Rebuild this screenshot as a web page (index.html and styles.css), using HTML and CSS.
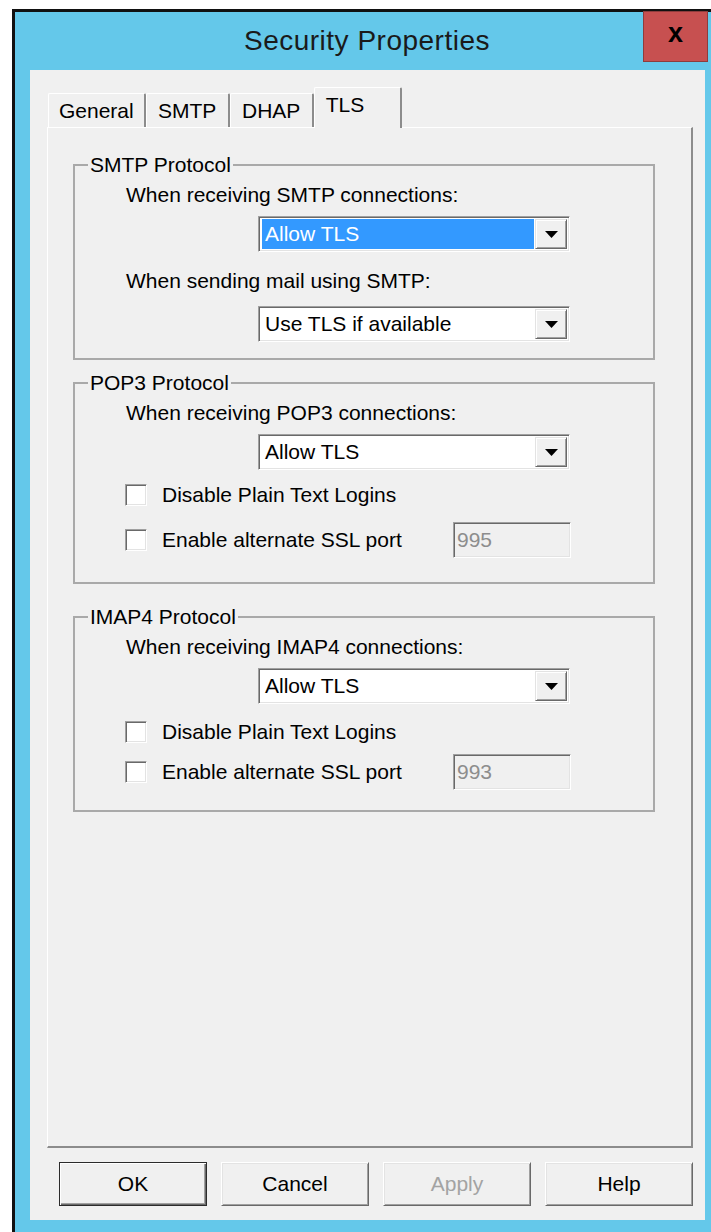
FILE: index.html
```html
<!DOCTYPE html>
<html lang="en">
<head>
<meta charset="utf-8">
<title>Security Properties</title>
<link rel="stylesheet" href="styles.css">
</head>
<body>
<div class="window">
  <div class="titlebar">
    <span class="title">Security Properties</span>
    <div class="close">x</div>
  </div>
  <div class="client">
    <div class="tabs">
      <div class="tab">General</div>
      <div class="tab">SMTP</div>
      <div class="tab">DHAP</div>
      <div class="tab tab-active">TLS</div>
    </div>
    <div class="panel">
      <fieldset class="group group-smtp">
        <legend>SMTP Protocol</legend>
        <div class="group-body">
          <div class="prompt">When receiving SMTP connections:</div>
          <div class="combo">
            <span class="combo-value combo-value-selected">Allow TLS</span>
            <span class="combo-btn"><svg width="13" height="7" viewBox="0 0 13 7"><polygon points="0,0 13,0 6.5,7" fill="#000"/></svg></span>
          </div>
          <div class="prompt prompt-next">When sending mail using SMTP:</div>
          <div class="combo combo-next">
            <span class="combo-value">Use TLS if available</span>
            <span class="combo-btn"><svg width="13" height="7" viewBox="0 0 13 7"><polygon points="0,0 13,0 6.5,7" fill="#000"/></svg></span>
          </div>
        </div>
      </fieldset>

      <fieldset class="group group-pop3">
        <legend>POP3 Protocol</legend>
        <div class="group-body">
          <div class="prompt">When receiving POP3 connections:</div>
          <div class="combo">
            <span class="combo-value">Allow TLS</span>
            <span class="combo-btn"><svg width="13" height="7" viewBox="0 0 13 7"><polygon points="0,0 13,0 6.5,7" fill="#000"/></svg></span>
          </div>
          <div class="row row-first">
            <label class="check"><span class="box"></span>Disable Plain Text Logins</label>
          </div>
          <div class="row row-second">
            <label class="check"><span class="box"></span>Enable alternate SSL port</label>
            <div class="field">995</div>
          </div>
        </div>
      </fieldset>

      <fieldset class="group group-imap4">
        <legend>IMAP4 Protocol</legend>
        <div class="group-body">
          <div class="prompt">When receiving IMAP4 connections:</div>
          <div class="combo">
            <span class="combo-value">Allow TLS</span>
            <span class="combo-btn"><svg width="13" height="7" viewBox="0 0 13 7"><polygon points="0,0 13,0 6.5,7" fill="#000"/></svg></span>
          </div>
          <div class="row row-first">
            <label class="check"><span class="box"></span>Disable Plain Text Logins</label>
          </div>
          <div class="row row-second">
            <label class="check"><span class="box"></span>Enable alternate SSL port</label>
            <div class="field">993</div>
          </div>
        </div>
      </fieldset>
    </div>
    <div class="actions">
      <div class="btn btn-default">OK</div>
      <div class="btn">Cancel</div>
      <div class="btn btn-disabled">Apply</div>
      <div class="btn">Help</div>
    </div>
  </div>
</div>
</body>
</html>
```

FILE: styles.css
```css
html, body {
  margin: 0;
  height: 100%;
  overflow: hidden;
  background: #fff;
}

body {
  font-family: "Liberation Sans", Arial, sans-serif;
  font-size: 21px;
  line-height: 24px;
  color: #000;
}

/* window frame */
.window {
  position: relative;
  margin: 9px 0 0 12px;
  width: 704px;
  border: 3px solid #111;
  border-bottom: none;
  background: #64c8ea;
  padding-bottom: 14px;
}

.titlebar {
  height: 58px;
  display: flex;
  align-items: center;
  justify-content: center;
}

.title {
  font-size: 28px;
  letter-spacing: 0.5px;
  color: #1a1a1a;
  line-height: 32px;
}

.close {
  position: absolute;
  top: -1px;
  right: 11px;
  width: 65px;
  height: 51px;
  box-sizing: border-box;
  background: #c75050;
  border: 1px solid #8e3c3c;
  display: flex;
  align-items: center;
  justify-content: center;
  padding-bottom: 8px;
  font-weight: bold;
  font-size: 27px;
  color: #000;
}

/* client area */
.client {
  margin: 0 14px 0 15px;
  height: 1150px;
  box-sizing: border-box;
  background: #f0f0f0;
  display: flex;
  flex-direction: column;
  padding: 17px 12px 14px 17px;
}

/* tab strip */
.tabs {
  display: flex;
  align-items: flex-end;
  height: 41px;
  margin: 0 0 -1px 1px;
  position: relative;
  z-index: 1;
}

.tab {
  height: 34px;
  box-sizing: border-box;
  margin-bottom: 1px;
  min-width: 84px;
  padding: 0 10px;
  display: flex;
  align-items: center;
  justify-content: center;
  background: #f0f0f0;
  border-top: 1px solid #fff;
  border-left: 1px solid #fff;
  border-right: 2px solid #8c8c8c;
  border-radius: 2px 2px 0 0;
}

.tab-active {
  height: 41px;
  margin-bottom: 0;
  align-items: flex-start;
  justify-content: flex-start;
  padding: 5px 36px 0 11px;
}

.panel {
  flex: 1;
  background: #f0f0f0;
  border-style: solid;
  border-width: 1px 2px 2px 1px;
  border-color: #fff #8c8c8c #8c8c8c #fff;
  padding: 25px 36px 0 25px;
}

/* group boxes */
.group {
  margin: 0;
  padding: 6px 0 16px 13px;
  border: 2px solid #a9a9a9;
  min-width: 0;
}

.group legend {
  padding: 0 2px;
  line-height: 24px;
}

.group-pop3 {
  margin-top: 11px;
  padding-bottom: 24px;
}

.group-imap4 {
  margin-top: 21px;
  padding-bottom: 20px;
}

.group-body {
  margin-left: 38px;
  width: 445px;
}

.prompt-next {
  margin-top: 17px;
}

/* drop-down lists */
.combo {
  margin: 9px 0 0 132px;
  width: 312px;
  height: 36px;
  box-sizing: border-box;
  display: flex;
  background: #fff;
  border: 1px solid;
  border-color: #a0a0a0 #fff #fff #a0a0a0;
  box-shadow: inset 1px 1px 0 #696969, inset -1px -1px 0 #e3e3e3;
  padding: 2px 2px 2px 3px;
}

.combo-next {
  margin-top: 13px;
}

.combo-value {
  flex: 1;
  display: flex;
  align-items: center;
  padding-left: 3px;
}

.combo-value-selected {
  background: #3399ff;
  color: #fff;
}

.combo-btn {
  width: 32px;
  box-sizing: border-box;
  margin-left: 1px;
  display: flex;
  align-items: center;
  justify-content: center;
  background: #f0f0f0;
  border: 1px solid;
  border-color: #e3e3e3 #696969 #696969 #e3e3e3;
  box-shadow: inset 1px 1px 0 #fff, inset -1px -1px 0 #a0a0a0;
}

/* check boxes and port fields */
.row {
  display: flex;
  align-items: center;
}

.group-pop3 .row-first { margin-top: 13px; }
.group-pop3 .row-second { margin-top: 15px; }
.group-imap4 .row-first { margin-top: 16px; }
.group-imap4 .row-second { margin-top: 10px; }

.check {
  display: flex;
  align-items: center;
  margin-left: -1px;
}

.box {
  width: 22px;
  height: 22px;
  box-sizing: border-box;
  margin-right: 15px;
  background: #fff;
  border: 1px solid;
  border-color: #a0a0a0 #fff #fff #a0a0a0;
  box-shadow: inset 1px 1px 0 #696969, inset -1px -1px 0 #e3e3e3;
}

.field {
  margin-left: auto;
  width: 118px;
  height: 36px;
  box-sizing: border-box;
  display: flex;
  align-items: center;
  padding-left: 3px;
  background: #f0f0f0;
  color: #8d8d8d;
  border: 1px solid;
  border-color: #a0a0a0 #fff #fff #a0a0a0;
  box-shadow: inset 1px 1px 0 #696969, inset -1px -1px 0 #e3e3e3;
}

/* dialog buttons */
.actions {
  display: flex;
  justify-content: flex-end;
  gap: 14px;
  margin-top: 14px;
}

.btn {
  width: 148px;
  height: 44px;
  box-sizing: border-box;
  display: flex;
  align-items: center;
  justify-content: center;
  background: #f0f0f0;
  border: 1px solid;
  border-color: #fff #696969 #696969 #fff;
  box-shadow: inset 1px 1px 0 #e3e3e3, inset -1px -1px 0 #a0a0a0;
}

.btn-default {
  border-color: #2b2b2b;
  box-shadow: inset 1px 1px 0 #fff, inset -1px -1px 0 #696969, inset -2px -2px 0 #a0a0a0;
}

.btn-disabled {
  color: #a3a3a3;
}
```
